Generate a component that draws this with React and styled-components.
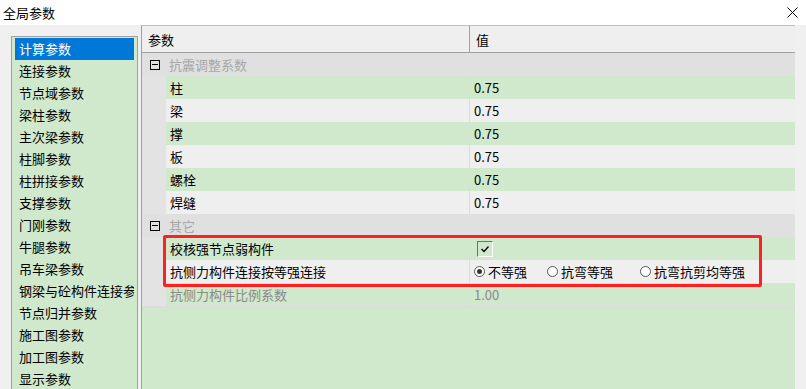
import React from 'react';
import styled, { createGlobalStyle } from 'styled-components';

const GlobalStyle = createGlobalStyle`
  html, body {
    margin: 0;
    padding: 0;
    background: #f0f0f0;
  }
  body {
    font-family: "Noto Sans CJK SC", "Microsoft YaHei", sans-serif;
    font-size: 13px;
    color: #000;
  }
  * {
    box-sizing: border-box;
  }
`;

const Window = styled.div`
  width: 806px;
  height: 389px;
  display: flex;
  flex-direction: column;
  overflow: hidden;
  background: #f0f0f0;
`;

const TitleBar = styled.div`
  height: 25px;
  flex: none;
  background: #ffffff;
  display: flex;
  align-items: center;
  justify-content: space-between;
  padding: 0 8px 0 3px;
`;

const Title = styled.span`
  font-size: 13px;
  line-height: 25px;
`;

const Close = styled.svg`
  width: 11px;
  height: 11px;
`;

const Body = styled.div`
  flex: 1;
  display: flex;
  gap: 3px;
  padding-right: 11px;
  min-height: 0;
`;

const ListBox = styled.div`
  width: 127px;
  flex: none;
  margin: 11px 0 0 11px;
  border: 1px solid #a0a0a0;
  border-bottom: none;
  background: #d0e8cc;
  padding: 1px 3px 0 3px;
  overflow: hidden;
`;

const ListItem = styled.div`
  height: 22px;
  line-height: 22px;
  padding-left: 4px;
  white-space: nowrap;
  overflow: hidden;
  background: ${({ $active }) => ($active ? '#0078d7' : 'transparent')};
  color: ${({ $active }) => ($active ? '#ffffff' : '#000')};
`;

const Grid = styled.div`
  flex: 1;
  display: flex;
  flex-direction: column;
  border-top: 1px solid #b4c8b0;
  border-left: 1px solid #a0a0a0;
  background: #d0e8cc;
`;

const HeaderRow = styled.div`
  height: 27px;
  display: flex;
  background: #efefef;
  border-bottom: 1px solid #a0a0a0;
`;

const HeaderCell = styled.div`
  display: flex;
  align-items: center;
  padding-left: 6px;
  ${({ $first }) => ($first ? 'width: 328px; border-right: 1px solid #a0a0a0;' : 'flex: 1;')}
`;

const GroupRow = styled.div`
  height: 23px;
  display: flex;
  align-items: center;
  background: #e0e0e0;
  color: #a8a8a8;
`;

const Toggle = styled.span`
  width: 10px;
  height: 10px;
  border: 1px solid #000;
  margin: 0 9px 0 8px;
  position: relative;
  &::after {
    content: '';
    position: absolute;
    left: 1px;
    right: 1px;
    top: 3px;
    height: 1px;
    background: #000;
  }
`;

const Row = styled.div`
  height: 23px;
  display: flex;
  background: #e3e3e3;
`;

const Cell = styled.div`
  display: flex;
  align-items: center;
  background: ${({ $alt }) => ($alt ? '#efefef' : '#d0e8cc')};
  color: ${({ $muted }) => ($muted ? '#8a8a8a' : '#000')};
  ${({ $name }) =>
    $name
      ? 'width: 304px; margin-left: 24px; padding-left: 4px; border-right: 1px solid #dcdcdc;'
      : 'flex: 1; padding-left: 4px;'}
  white-space: nowrap;
`;

const Highlight = styled.div`
  position: relative;
`;

const RedFrame = styled.div`
  position: absolute;
  left: 21px;
  top: -2px;
  width: 599px;
  height: 52px;
  border: 3px solid #ff2020;
  border-radius: 2px;
  pointer-events: none;
`;

const CheckBox = styled.span`
  width: 16px;
  height: 16px;
  border-top: 1px solid #707070;
  border-left: 1px solid #707070;
  border-right: 1px solid #ffffff;
  border-bottom: 1px solid #ffffff;
  margin-left: 3px;
  display: flex;
  align-items: center;
  justify-content: center;
`;

const Radio = styled.span`
  display: flex;
  align-items: center;
  gap: 3px;
  margin-right: ${({ $gap }) => $gap}px;
`;

const Dot = styled.span`
  width: 11px;
  height: 11px;
  border-radius: 50%;
  border: 1px solid #555;
  background: #fff;
  display: flex;
  align-items: center;
  justify-content: center;
  &::after {
    content: '';
    width: 5px;
    height: 5px;
    border-radius: 50%;
    background: ${({ $on }) => ($on ? '#333' : 'transparent')};
  }
`;

const Divider = styled.div`
  height: 2px;
  background: #dcdcdc;
`;

const listItems = [
  '计算参数', '连接参数', '节点域参数', '梁柱参数', '主次梁参数', '柱脚参数',
  '柱拼接参数', '支撑参数', '门刚参数', '牛腿参数', '吊车梁参数',
  '钢梁与砼构件连接参数', '节点归并参数', '施工图参数', '加工图参数', '显示参数',
];

const quakeRows = ['柱', '梁', '撑', '板', '螺栓', '焊缝'];

const radios = [
  { label: '不等强', on: true, gap: 20 },
  { label: '抗弯等强', on: false, gap: 27 },
  { label: '抗弯抗剪均等强', on: false, gap: 0 },
];

export default function App() {
  return (
    <Window>
      <GlobalStyle />
      <TitleBar>
        <Title>全局参数</Title>
        <Close viewBox="0 0 11 11">
          <path d="M0.5 0.5 L10.5 10.5 M10.5 0.5 L0.5 10.5" stroke="#000" strokeWidth="1" fill="none" />
        </Close>
      </TitleBar>
      <Body>
        <ListBox>
          {listItems.map((item, i) => (
            <ListItem key={item} $active={i === 0}>{item}</ListItem>
          ))}
        </ListBox>
        <Grid>
          <HeaderRow>
            <HeaderCell $first>参数</HeaderCell>
            <HeaderCell>值</HeaderCell>
          </HeaderRow>
          <GroupRow><Toggle />抗震调整系数</GroupRow>
          {quakeRows.map((name, i) => (
            <Row key={name}>
              <Cell $name $alt={i % 2 === 1}>{name}</Cell>
              <Cell $alt={i % 2 === 1}>0.75</Cell>
            </Row>
          ))}
          <GroupRow><Toggle />其它</GroupRow>
          <Highlight>
            <Row>
              <Cell $name>校核强节点弱构件</Cell>
              <Cell>
                <CheckBox>
                  <svg width="10" height="8" viewBox="0 0 10 8">
                    <path d="M1.5 4 L4 6.5 L8.5 1.5" stroke="#000" strokeWidth="1.3" fill="none" />
                  </svg>
                </CheckBox>
              </Cell>
            </Row>
            <Row>
              <Cell $name $alt>抗侧力构件连接按等强连接</Cell>
              <Cell $alt>
                {radios.map((r) => (
                  <Radio key={r.label} $gap={r.gap}>
                    <Dot $on={r.on} />
                    {r.label}
                  </Radio>
                ))}
              </Cell>
            </Row>
            <RedFrame />
          </Highlight>
          <Row>
            <Cell $name $muted>抗侧力构件比例系数</Cell>
            <Cell $muted>1.00</Cell>
          </Row>
          <Divider />
        </Grid>
      </Body>
    </Window>
  );
}
